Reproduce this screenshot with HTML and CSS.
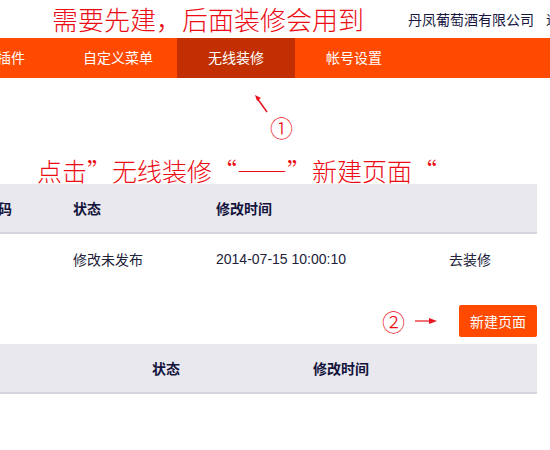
FILE: index.html
```html
<!DOCTYPE html>
<html lang="zh-CN">
<head>
    <meta charset="UTF-8">
    <meta name="viewport" content="width=device-width, initial-scale=1.0">
    <title>无线装修</title>
    <link rel="stylesheet" href="styles.css">
</head>
<body>
    <div class="top">
        <div class="note-title">需要先建，后面装修会用到</div>
        <div class="company">丹凤葡萄酒有限公司</div>
        <div class="company">退出</div>
    </div>

    <div class="nav">
        <div class="nav-item first">应用插件</div>
        <div class="nav-item">自定义菜单</div>
        <div class="nav-item active">无线装修</div>
        <div class="nav-item">帐号设置</div>
        <div class="nav-item"></div>
    </div>

    <div class="guide">
        <svg class="guide-arrow" width="22" height="26" viewBox="0 0 22 26">
            <line x1="17" y1="22" x2="7" y2="8" stroke="#e8141e" stroke-width="1.5"/>
            <polygon points="5,5 11,8 7,11" fill="#e8141e"/>
        </svg>
        <span class="step-num step-one">①</span>
        <div class="step-text">点击”无线装修“——”新建页面“</div>
    </div>

    <table class="list list-pages">
        <colgroup>
            <col style="width: 103px">
            <col style="width: 143px">
            <col style="width: 233px">
            <col style="width: 88px">
        </colgroup>
        <thead>
            <tr>
                <th>二维码</th>
                <th>状态</th>
                <th>修改时间</th>
                <th></th>
            </tr>
        </thead>
        <tbody>
            <tr>
                <td></td>
                <td>修改未发布</td>
                <td>2014-07-15 10:00:10</td>
                <td>去装修</td>
            </tr>
        </tbody>
    </table>

    <div class="toolbar">
        <span class="step-num">②</span>
        <svg class="tool-arrow" width="22" height="8" viewBox="0 0 22 8">
            <line x1="0" y1="4" x2="17" y2="4" stroke="#e8141e" stroke-width="1.2"/>
            <polygon points="22,4 14,1 14,7" fill="#e8141e"/>
        </svg>
        <button class="btn-new">新建页面</button>
    </div>

    <table class="list list-custom">
        <colgroup>
            <col style="width: 152px">
            <col style="width: 161px">
            <col style="width: 224px">
        </colgroup>
        <thead>
            <tr>
                <th></th>
                <th>状态</th>
                <th>修改时间</th>
            </tr>
        </thead>
    </table>
</body>
</html>
```

FILE: styles.css
```css
body {
    font-family: "Liberation Sans", "Noto Sans CJK SC", sans-serif;
    margin: 0;
    width: 550px;
    height: 450px;
    overflow: hidden;
    background-color: white;
    color: #222238;
}
.top {
    height: 38px;
    display: flex;
    align-items: center;
    white-space: nowrap;
}
.note-title {
    flex: 0 0 408px;
    box-sizing: border-box;
    padding-left: 52px;
    font-family: "Noto Sans CJK SC", sans-serif;
    font-size: 26px;
    font-weight: 300;
    line-height: 34px;
    color: #ec0c14;
}
.company {
    font-size: 14px;
    color: #161640;
    margin-right: 12px;
}
.nav {
    height: 40px;
    background-color: #ff4a00;
    display: flex;
    margin-left: -59px;
}
.nav-item {
    flex: 0 0 118px;
    box-sizing: border-box;
    text-align: center;
    line-height: 40px;
    font-size: 14px;
    color: white;
}
.nav-item.first {
    padding-right: 6px;
}
.nav-item.active {
    background-color: #c22f00;
}
.guide {
    position: relative;
    height: 106px;
}
.guide-arrow {
    position: absolute;
    left: 250px;
    top: 12px;
}
.step-num {
    font-family: "Noto Sans CJK SC", sans-serif;
    font-size: 23px;
    font-weight: 300;
    line-height: 24px;
    color: #ec0c14;
}
.step-one {
    position: absolute;
    left: 270px;
    top: 37px;
}
.step-text {
    padding-top: 77px;
    padding-left: 37px;
    font-family: "Noto Sans CJK SC", sans-serif;
    font-size: 25px;
    font-weight: 300;
    line-height: 30px;
    color: #ec0c14;
    white-space: nowrap;
}
.list {
    border-collapse: collapse;
    table-layout: fixed;
    font-size: 14px;
}
.list-pages {
    width: 567px;
    margin-left: -30px;
}
.list-custom {
    width: 537px;
}
.list th {
    height: 48px;
    padding: 0;
    text-align: left;
    font-weight: bold;
    color: #14143c;
    background-color: #e8e8ee;
    border-bottom: 2px solid #d4d4dc;
    white-space: nowrap;
}
.list td {
    height: 50px;
    padding: 0;
    color: #22223a;
    white-space: nowrap;
}
.toolbar {
    width: 537px;
    height: 32px;
    padding: 21px 0 7px;
    display: flex;
    justify-content: flex-end;
    align-items: center;
}
.tool-arrow {
    margin-left: 10px;
    margin-right: 22px;
}
.btn-new {
    width: 78px;
    height: 32px;
    border: none;
    border-radius: 2px;
    background-color: #ff4a00;
    color: white;
    font-family: "Noto Sans CJK SC", sans-serif;
    font-size: 14px;
    padding: 0;
}
```
